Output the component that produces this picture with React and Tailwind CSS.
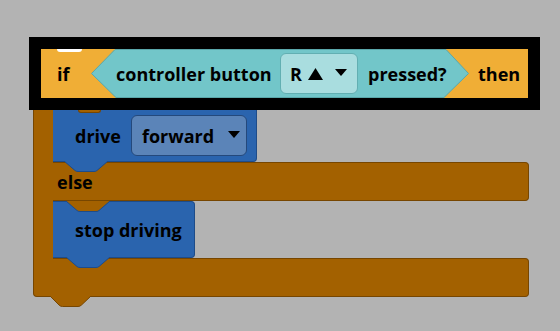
import React from "react";

const font = { fontFamily: '"Open Sans", "Noto Sans", sans-serif' };

function Tab({ color, stroke, className }) {
  return (
    <svg className={className} width="45" height="11" viewBox="0 0 45 11">
      <path d="M0 0 L11 9.5 Q12 10.5 14 10.5 L30 10.5 Q32 10.5 33 9.5 L44 0" fill={color} stroke={stroke} strokeWidth="1" />
    </svg>
  );
}

function Down({ className }) {
  return (
    <svg className={className} width="12" height="7" viewBox="0 0 12 7">
      <path d="M0 0 L12 0 L6.5 6.5 Q6 7 5.5 6.5 Z" fill="#000" />
    </svg>
  );
}

export default function App() {
  return (
    <div className="w-[560px] h-[331px] bg-[#b3b3b3] overflow-hidden font-bold text-black text-[18px] leading-none" style={font}>
      <div className="pt-[37px] pl-[29px]">
        {/* header with black highlight */}
        <div className="relative w-[511px] h-[73px] bg-black p-[12px]">
          <div className="relative flex items-center w-[487px] h-[49px] bg-[#f0ae36]">
            <div className="absolute left-[16px] top-0 w-[25px] h-[3px] bg-white rounded-b-[3px]" />
            <span className="ml-[16px] w-[34px]">if</span>
            <div className="relative w-[378px] h-[49px] flex items-center">
              <svg className="absolute inset-0" width="378" height="49" viewBox="0 0 378 49">
                <path d="M24 0.5 L355 0.5 L377.5 24.5 L353 48.5 L25 48.5 L0.5 24.5 Z" fill="#72c6c9" stroke="#5aa7aa" strokeWidth="1" />
              </svg>
              <span className="relative ml-[25px] w-[164px]">controller button</span>
              <div className="relative w-[78px] h-[41px] rounded-[6px] bg-[#a9dddf] border border-[#62afb2] flex items-center pl-[9px]">
                <span>R</span>
                <svg className="ml-[6px]" width="15" height="12" viewBox="0 0 15 12"><path d="M7.5 0 L15 12 L0 12 Z" fill="#000" /></svg>
                <Down className="ml-[12px] -mt-[3px]" />
              </div>
              <span className="relative ml-[10px]">pressed?</span>
            </div>
            <span className="ml-[9px]">then</span>
          </div>
        </div>

        {/* body of C block */}
        <div className="ml-[4px] w-[496px]">
          {/* row 1 */}
          <div className="flex h-[52px]">
            <div className="w-[20px] bg-[#a36100] border-l border-[#774600]" />
            <div className="relative w-[204px] bg-[#2a64ae] border-r border-b border-[#1e4c89] rounded-br-[4px] flex items-center">
              <div className="absolute left-[25px] top-0 w-[23px] h-[3px] bg-[#a36100] border-x border-b border-[#774600] rounded-b-[3px]" />
              <span className="ml-[22px]">drive</span>
              <div className="ml-[10px] w-[116px] h-[41px] rounded-[6px] bg-[#5b84b8] border border-[#24497c] flex items-center pl-[10px]">
                <span>forward</span>
                <Down className="ml-[14px] -mt-[3px]" />
              </div>
              <Tab color="#2a64ae" stroke="#1e4c89" className="absolute left-[11px] -bottom-[11px] z-10" />
            </div>
          </div>
          {/* else bar */}
          <div className="flex h-[39px]">
            <div className="w-[20px] bg-[#a36100] border-l border-[#774600]" />
            <div className="flex-1 bg-[#a36100] border-y border-r border-[#774600] rounded-r-[4px]" />
          </div>
          <div className="-mt-[39px] h-[39px] pl-[24px] flex items-center relative">
            <span>else</span>
          </div>
          {/* row 2 */}
          <div className="flex h-[57px]">
            <div className="w-[20px] bg-[#a36100] border-l border-[#774600]" />
            <div className="relative w-[142px] bg-[#2a64ae] border border-l-0 border-[#1e4c89] rounded-r-[4px] flex items-center">
              <Tab color="#a36100" stroke="#1e4c89" className="absolute left-[13px] -top-[1px]" />
              <span className="ml-[22px]">stop driving</span>
              <Tab color="#2a64ae" stroke="#1e4c89" className="absolute left-[13px] -bottom-[11px] z-10" />
            </div>
          </div>
          {/* bottom bar */}
          <div className="relative flex h-[39px]">
            <div className="w-[20px] bg-[#a36100] border-l border-b border-[#774600] rounded-bl-[4px]" />
            <div className="flex-1 bg-[#a36100] border-y border-r border-[#774600] rounded-r-[4px]" />
            <svg className="absolute left-[17px] top-[38px]" width="42" height="11" viewBox="0 0 42 11">
              <path d="M0 0 L9 9 Q10.5 10.5 12.5 10.5 L28 10.5 Q30 10.5 31.5 9 L41 0" fill="#a36100" stroke="#774600" strokeWidth="1" />
            </svg>
          </div>
        </div>
      </div>
    </div>
  );
}
